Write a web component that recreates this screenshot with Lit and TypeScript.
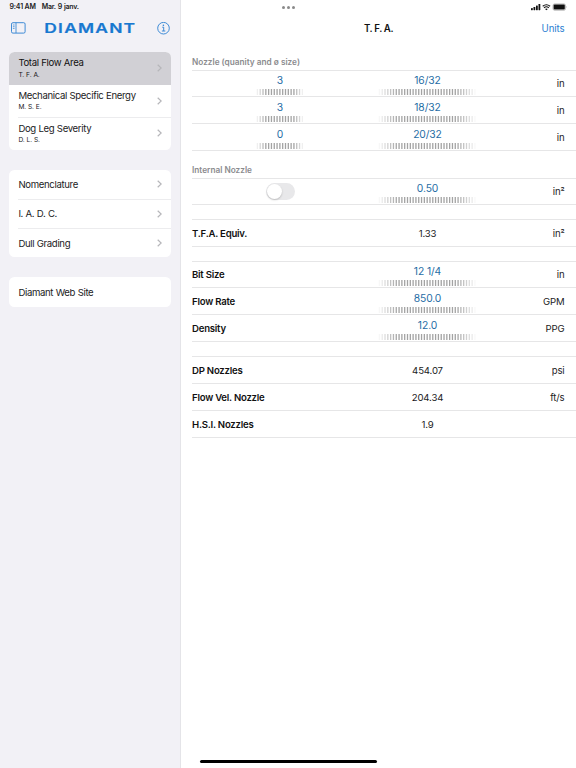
import { LitElement, html, svg, css, nothing } from "lit";
import { customElement, property } from "lit/decorators.js";

interface NavItem {
  title: string;
  sub?: string;
  selected?: boolean;
  link?: boolean;
}

interface Row {
  label?: string;
  count?: string;
  toggle?: boolean;
  value: string;
  wheel?: boolean;
  unit?: string;
  short?: boolean;
}

const NAV: NavItem[][] = [
  [
    { title: "Total Flow Area", sub: "T. F. A.", selected: true },
    { title: "Mechanical Specific Energy", sub: "M. S. E." },
    { title: "Dog Leg Severity", sub: "D. L. S." },
  ],
  [{ title: "Nomenclature" }, { title: "I. A. D. C." }, { title: "Dull Grading" }],
  [{ title: "Diamant Web Site", link: true }],
];

const SECTIONS: { heading?: string; rows: Row[] }[] = [
  {
    heading: "Nozzle (quanity and ø size)",
    rows: [
      { count: "3", value: "16/32", wheel: true, unit: "in", short: true },
      { count: "3", value: "18/32", wheel: true, unit: "in" },
      { count: "0", value: "20/32", wheel: true, unit: "in" },
    ],
  },
  { heading: "Internal Nozzle", rows: [{ toggle: true, value: "0.50", wheel: true, unit: "in²", short: true }] },
  { rows: [{ label: "T.F.A. Equiv.", value: "1.33", unit: "in²" }] },
  {
    rows: [
      { label: "Bit Size", value: "12 1/4", wheel: true, unit: "in", short: true },
      { label: "Flow Rate", value: "850.0", wheel: true, unit: "GPM" },
      { label: "Density", value: "12.0", wheel: true, unit: "PPG" },
    ],
  },
  {
    rows: [
      { label: "DP Nozzles", value: "454.07", unit: "psi" },
      { label: "Flow Vel. Nozzle", value: "204.34", unit: "ft/s" },
      { label: "H.S.I. Nozzles", value: "1.9" },
    ],
  },
];

@customElement("tick-wheel")
export class TickWheel extends LitElement {
  @property({ type: Number }) ticks = 35;

  static styles = css`
    :host { display: block; height: 6px; }
    svg { display: block; }
  `;

  render() {
    const pitch = 2.81;
    const width = this.ticks * pitch;
    const mid = (this.ticks - 1) / 2;
    return html`<svg width=${width} height="6" viewBox="0 0 ${width} 6">
      ${Array.from({ length: this.ticks }, (_, i) => {
        const edge = mid + 0.6 - Math.abs(i - mid);
        const fade = Math.min(1, edge / (this.ticks > 20 ? 7 : 3.6));
        return svg`<rect x=${i * pitch + 0.75} y="0" width="1.3" height="6" fill="#a3a3a3" opacity=${fade}></rect>`;
      })}
    </svg>`;
  }
}

@customElement("side-bar")
export class SideBar extends LitElement {
  static styles = css`
    :host { display: block; box-sizing: border-box; width: 181px; background: #f2f1f6; border-right: 1px solid #e4e4e8; }
    .status { height: 14px; padding-left: 9.5px; display: flex; gap: 6px; font-size: 7px; font-weight: 600; line-height: 14px; letter-spacing: -0.17px; color: #1a1a1c; white-space: nowrap; }
    .status span:last-child { letter-spacing: -0.25px; word-spacing: 0.5px; }
    .bar { height: 28px; display: flex; align-items: center; padding: 0 10px 0 10.5px; justify-content: space-between; }
    .bar svg { display: block; flex: none; }
    .logo { width: 92px; height: 14px; overflow: visible; }
    .logo text { font-size: 13.2px; font-weight: 600; letter-spacing: 0.9px; fill: #1878d0; stroke: #1878d0; stroke-width: 0.2px; }
    .group { margin: 10px 9.5px 0 9.2px; border-radius: 5.5px; background: #fff; overflow: hidden; }
    .group + .group { margin-top: 19.8px; }
    .item { height: 29.3px; box-sizing: border-box; display: flex; align-items: center; padding: 0 9px 0 9.2px; position: relative; }
    .item.tall { height: 32.6px; }
    .item.selected { background: #d1d0d5; }
    .item + .item::before { content: ""; position: absolute; left: 9px; right: 0; top: 0; height: 1px; background: #ececee; }
    .item.selected + .item::before { display: none; }
    .text { flex: 1; white-space: nowrap; padding-top: 1.4px; }
    .title { font-size: 9.6px; line-height: 12px; letter-spacing: -0.35px; word-spacing: 0.2px; color: #1b1b1d; }
    .sub { font-size: 6.6px; line-height: 9px; margin-top: 1.3px; letter-spacing: -0.1px; word-spacing: 0.2px; color: #1b1b1d; }
    .tall .text { padding-top: 0.7px; }
    .selected .title, .selected .sub { color: #111; }
  `;

  render() {
    return html`
      <div class="status"><span>9:41 AM</span><span>Mar. 9 janv.</span></div>
      <div class="bar">
        <svg width="15" height="12" viewBox="0 0 15 12" fill="none" stroke="#2a80d2">
          <rect x=".5" y=".7" width="13.6" height="10.4" rx="1.4" stroke-width=".9"></rect>
          <path d="M5 .8V11" stroke-width=".8"></path>
          <path d="M1.9 3H3.6M1.9 4.7H3.6M1.9 6.4H3.6" stroke-width=".7"></path>
        </svg>
        <svg class="logo" viewBox="0 0 92 14"><text x="-0.7" y="11.8" textLength="92" lengthAdjust="spacingAndGlyphs">DIAMANT</text></svg>
        <svg width="13" height="13" viewBox="0 0 13 13" fill="none" stroke="#2a80d2">
          <circle cx="6.5" cy="6.2" r="5.8" stroke-width=".9"></circle>
          <path d="M5.2 5.2H6.7V8.9M4.9 9H8.3" stroke-width=".9"></path>
          <circle cx="6.4" cy="3.3" r=".8" fill="#2a80d2" stroke="none"></circle>
        </svg>
      </div>
      ${NAV.map(
        (group) => html`<div class="group">
          ${group.map(
            (item) => html`<div class="item ${item.sub ? "tall" : ""} ${item.selected ? "selected" : ""}">
              <div class="text">
                <div class="title">${item.title}</div>
                ${item.sub ? html`<div class="sub">${item.sub}</div>` : nothing}
              </div>
              ${item.link
                ? nothing
                : html`<svg width="5" height="8" viewBox="0 0 5 8" fill="none" stroke="#b6b6ba" stroke-width="1.2"><path d="M.7 .7 4.2 4 .7 7.3"></path></svg>`}
            </div>`
          )}
        </div>`
      )}
    `;
  }
}

@customElement("app-root")
export class AppRoot extends LitElement {
  static styles = css`
    :host { display: grid; grid-template-columns: 181px 1fr; width: 576px; height: 768px; overflow: hidden; position: relative; background: #fff; font-family: Inter, "Liberation Sans", sans-serif; color: #1b1b1d; }
    main { display: flex; flex-direction: column; min-width: 0; }
    .status { height: 14px; display: grid; grid-template-columns: 1fr auto; align-items: center; padding: 0 9.5px 0 101px; }
    .dots { display: flex; gap: 1.9px; }
    .dots i { width: 3px; height: 3px; border-radius: 50%; background: #8a8a8a; }
    .status svg { display: block; }
    .nav { height: 28px; display: grid; grid-template-columns: 1fr auto 1fr; align-items: center; font-size: 9.7px; }
    .nav .name { grid-column: 2; font-weight: 600; color: #111; letter-spacing: -0.45px; word-spacing: 0.3px; }
    .nav .units { text-align: right; padding-right: 11.5px; color: #2a80d2; letter-spacing: -0.1px; }
    .table { margin-left: 11px; }
    .section { border-top: 1px solid #e6e6e7; margin-top: 14px; }
    .heading { height: 13px; line-height: 13px; font-size: 8.25px; font-weight: 600; color: #8b8b8e; white-space: nowrap; }
    .heading.first { margin-top: 14px; height: 14px; }
    .heading.next { margin-top: 13px; height: 14px; }
    .heading + .section { margin-top: 0; }
    .row { height: 27px; box-sizing: border-box; border-bottom: 1px solid #e6e6e7; display: grid; grid-template-columns: 176px 119px 1fr; font-size: 9.6px; }
    .row.short { height: 26px; }
    .cell { display: flex; flex-direction: column; align-items: center; justify-content: center; min-width: 0; letter-spacing: -0.15px; }
    .cell.pick { justify-content: flex-end; letter-spacing: -0.1px; }
    .pick span { font-size: 10.3px; line-height: 13px; color: #1f6da5; margin-bottom: 2.2px; }
    .pick tick-wheel { margin-bottom: 1px; }
    .cell.label { align-items: flex-start; font-weight: 600; color: #111; letter-spacing: -0.23px; white-space: nowrap; }
    .cell.unit { align-items: flex-end; padding-right: 11.5px; }
    .toggle { width: 29px; height: 17.5px; border-radius: 9px; background: #e8e8ea; display: flex; align-items: center; box-sizing: border-box; padding-left: 1px; }
    .toggle i { width: 15.5px; height: 15.5px; border-radius: 50%; background: #fff; box-shadow: 0 1px 2px #0003; }
    .home { position: absolute; left: 199.5px; top: 760px; width: 177px; height: 3px; border-radius: 2px; background: #000; }
  `;

  private first(row: Row) {
    if (row.toggle) return html`<div class="cell"><div class="toggle"><i></i></div></div>`;
    if (row.count) return html`<div class="cell pick"><span>${row.count}</span><tick-wheel .ticks=${17}></tick-wheel></div>`;
    return html`<div class="cell label">${row.label}</div>`;
  }

  render() {
    return html`
      <side-bar></side-bar>
      <main>
        <div class="status">
          <div class="dots"><i></i><i></i><i></i></div>
          <svg width="36" height="8" viewBox="0 0 36 8">
            <g fill="#111">
              <rect x="0" y="5" width="1.8" height="2.2" rx=".4"></rect>
              <rect x="2.5" y="4" width="1.8" height="3.2" rx=".4"></rect>
              <rect x="5" y="2.6" width="1.8" height="4.6" rx=".4"></rect>
              <rect x="7.5" y="1.1" width="1.8" height="6.1" rx=".4"></rect>
              <path d="M15.4 7.3 14 5.9Q15.4 4.9 16.8 5.9Z"></path>
              <rect x="22.6" y="1.6" width="11.2" height="5" rx="1"></rect>
              <path d="M35 3.1Q36 4.1 35 5.1Z" opacity=".5"></path>
            </g>
            <g fill="none" stroke="#111">
              <path d="M11.7 3.2Q15.4 .2 19.1 3.2M13 4.7Q15.4 2.8 17.8 4.7" stroke-width="1.1"></path>
              <rect x="22" y=".9" width="12.5" height="6.4" rx="1.7" stroke-width=".6" opacity=".45"></rect>
            </g>
          </svg>
        </div>
        <div class="nav"><span class="name">T. F. A.</span><span class="units">Units</span></div>
        <div class="table">
          ${SECTIONS.map(
            (section, i) => html`
              ${section.heading ? html`<div class="heading ${i ? "next" : "first"}">${section.heading}</div>` : nothing}
              <div class="section">
                ${section.rows.map(
                  (row) => html`<div class="row ${row.short ? "short" : ""}">
                    ${this.first(row)}
                    ${row.wheel
                      ? html`<div class="cell pick"><span>${row.value}</span><tick-wheel></tick-wheel></div>`
                      : html`<div class="cell">${row.value}</div>`}
                    <div class="cell unit">${row.unit ?? nothing}</div>
                  </div>`
                )}
              </div>
            `
          )}
        </div>
      </main>
      <div class="home"></div>
    `;
  }
}
